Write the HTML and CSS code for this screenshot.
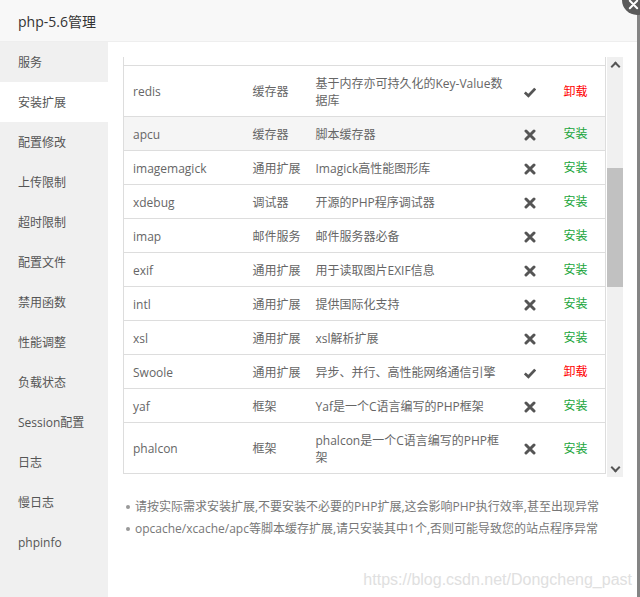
FILE: index.html
```html
<!DOCTYPE html>
<html lang="zh-CN">
<head>
<meta charset="utf-8">
<title>php-5.6管理</title>
<link rel="stylesheet" href="styles.css">
</head>
<body>
<div class="dialog">
  <div class="title">php-5.6管理</div>
  <a class="close" aria-label="关闭">
    <svg viewBox="0 0 12 12" width="11" height="11"><path d="M2 2L10 10M10 2L2 10" stroke="#fff" stroke-width="2.2" stroke-linecap="round"/></svg>
  </a>
  <div class="body">
    <ul class="side">
      <li>服务</li>
      <li class="on">安装扩展</li>
      <li>配置修改</li>
      <li>上传限制</li>
      <li>超时限制</li>
      <li>配置文件</li>
      <li>禁用函数</li>
      <li>性能调整</li>
      <li>负载状态</li>
      <li>Session配置</li>
      <li>日志</li>
      <li>慢日志</li>
      <li>phpinfo</li>
    </ul>
    <div class="main">
      <div class="tablebox">
        <div class="scroller">
          <table class="ext">
            <colgroup><col class="c-name"><col class="c-type"><col class="c-desc"><col class="c-st"><col class="c-op"></colgroup>
            <tbody>
              <tr class="prev"><td colspan="5"></td></tr>
              <tr><td>redis</td><td>缓存器</td><td>基于内存亦可持久化的Key-Value数据库</td><td class="st"><span class="ok"></span></td><td class="op"><a class="un">卸载</a></td></tr>
              <tr class="hover"><td>apcu</td><td>缓存器</td><td>脚本缓存器</td><td class="st"><span class="no"></span></td><td class="op"><a class="in">安装</a></td></tr>
              <tr><td>imagemagick</td><td>通用扩展</td><td>Imagick高性能图形库</td><td class="st"><span class="no"></span></td><td class="op"><a class="in">安装</a></td></tr>
              <tr><td>xdebug</td><td>调试器</td><td>开源的PHP程序调试器</td><td class="st"><span class="no"></span></td><td class="op"><a class="in">安装</a></td></tr>
              <tr><td>imap</td><td>邮件服务</td><td>邮件服务器必备</td><td class="st"><span class="no"></span></td><td class="op"><a class="in">安装</a></td></tr>
              <tr><td>exif</td><td>通用扩展</td><td>用于读取图片EXIF信息</td><td class="st"><span class="no"></span></td><td class="op"><a class="in">安装</a></td></tr>
              <tr><td>intl</td><td>通用扩展</td><td>提供国际化支持</td><td class="st"><span class="no"></span></td><td class="op"><a class="in">安装</a></td></tr>
              <tr><td>xsl</td><td>通用扩展</td><td>xsl解析扩展</td><td class="st"><span class="no"></span></td><td class="op"><a class="in">安装</a></td></tr>
              <tr><td>Swoole</td><td>通用扩展</td><td>异步、并行、高性能网络通信引擎</td><td class="st"><span class="ok"></span></td><td class="op"><a class="un">卸载</a></td></tr>
              <tr><td>yaf</td><td>框架</td><td>Yaf是一个C语言编写的PHP框架</td><td class="st"><span class="no"></span></td><td class="op"><a class="in">安装</a></td></tr>
              <tr><td>phalcon</td><td>框架</td><td>phalcon是一个C语言编写的PHP框架</td><td class="st"><span class="no"></span></td><td class="op"><a class="in">安装</a></td></tr>
            </tbody>
          </table>
        </div>
        <div class="vbar">
          <span class="arrow up"></span>
          <span class="track"><span class="thumb"></span></span>
          <span class="arrow down"></span>
        </div>
      </div>
      <ul class="help">
        <li>请按实际需求安装扩展,不要安装不必要的PHP扩展,这会影响PHP执行效率,甚至出现异常</li>
        <li>opcache/xcache/apc等脚本缓存扩展,请只安装其中1个,否则可能导致您的站点程序异常</li>
      </ul>
    </div>
  </div>
  <div class="watermark">https://blog.csdn.net/Dongcheng_past</div>
</div>
</body>
</html>
```

FILE: styles.css
```css
* { box-sizing: border-box; }
html, body { margin: 0; padding: 0; }
body {
  width: 640px;
  height: 597px;
  overflow: hidden;
  background: #848484;
  font-family: "Open Sans", "Noto Sans CJK SC", sans-serif;
  font-size: 12px;
  color: #666;
}
.dialog {
  position: relative;
  width: 637px;
  height: 597px;
  background: #fff;
  display: flex;
  flex-direction: column;
}
.title {
  height: 42px;
  line-height: 44px;
  padding-left: 18px;
  background: #f8f8f8;
  border-bottom: 1px solid #eee;
  color: #333;
  font-size: 14px;
}
.close {
  position: absolute;
  left: 622px;
  top: -15px;
  width: 30px;
  height: 30px;
  border-radius: 50%;
  background: #5a5a5a;
  display: flex;
  align-items: flex-start;
  justify-content: flex-start;
  padding: 14px 0 0 6px;
  z-index: 2;
}
.close svg { display: block; }
.body {
  flex: 1;
  display: flex;
  min-height: 0;
}
.side {
  list-style: none;
  margin: 0;
  padding: 0;
  width: 108px;
  background: #f0f0f0;
}
.side li {
  height: 40px;
  line-height: 42px;
  padding-left: 18px;
  color: #555;
}
.side li.on { background: #fff; }
.main {
  flex: 1;
  padding: 15px 0 0 15px;
}
.tablebox {
  display: flex;
  width: 500px;
}
.scroller {
  width: 483px;
  height: 420px;
  overflow: hidden;
}
.ext {
  width: 482px;
  table-layout: fixed;
  border-collapse: collapse;
  border-left: 1px solid #ddd;
  border-right: 1px solid #ddd;
}
.c-name { width: 120px; }
.c-type { width: 63px; }
.c-desc { width: 207px; }
.c-st { width: 32px; }
.c-op { width: 60px; }
.ext td {
  padding: 9px 0 7px 9px;
  line-height: 17px;
  border-bottom: 1px solid #ddd;
  color: #666;
  vertical-align: middle;
  white-space: nowrap;
}
.ext tr.prev td { height: 8px; padding: 0; }
.ext td:nth-child(3) { padding-left: 9px; padding-right: 11px; white-space: normal; }
.ext tr.hover td { background: #f5f5f5; }
.ext td.st { padding: 1px 0 0; text-align: center; }
.ext td.op { padding: 1px 0 0 18px; }
.ok, .no {
  display: inline-block;
  width: 12px;
  height: 12px;
  vertical-align: middle;
  background-repeat: no-repeat;
  background-size: 12px 12px;
}
.ok {
  background-image: url("data:image/svg+xml,%3Csvg xmlns='http://www.w3.org/2000/svg' viewBox='0 0 12 12'%3E%3Cpath d='M0.8 6.4L4.4 9.8L11.2 2.6' fill='none' stroke='%23555' stroke-width='2.8' stroke-linejoin='miter'/%3E%3C/svg%3E");
}
.no {
  background-image: url("data:image/svg+xml,%3Csvg xmlns='http://www.w3.org/2000/svg' viewBox='0 0 12 12'%3E%3Cpath d='M2 2L10 10M10 2L2 10' fill='none' stroke='%23555' stroke-width='3' stroke-linecap='round'/%3E%3C/svg%3E");
}
.un { color: #f00; }
.in { color: #20a53a; }
.vbar {
  width: 16px;
  height: 420px;
  margin-left: 1px;
  background: #f0f0f0;
  display: flex;
  flex-direction: column;
}
.arrow {
  height: 17px;
  display: flex;
  align-items: center;
  justify-content: center;
}
.arrow::before {
  content: "";
  width: 5px;
  height: 5px;
  border-left: 2px solid #555;
  border-top: 2px solid #555;
}
.arrow.up::before { transform: translateY(1px) rotate(45deg); }
.arrow.down::before { transform: translateY(-1px) rotate(225deg); }
.track {
  flex: 1;
  padding-top: 94px;
}
.thumb {
  display: block;
  height: 119px;
  background: #c1c1c1;
}
.help {
  list-style: none;
  margin: 19px 0 0;
  padding: 0 0 0 3px;
}
.help li {
  position: relative;
  line-height: 22px;
  padding-left: 9px;
  color: #777;
  white-space: nowrap;
}
.help li::before {
  content: "";
  position: absolute;
  left: 0;
  top: 9px;
  width: 4px;
  height: 4px;
  border-radius: 50%;
  background: #999;
}
.watermark {
  position: absolute;
  right: 5px;
  bottom: 8px;
  font-family: "Liberation Sans", Arial, sans-serif;
  font-size: 16px;
  color: #e0e0e0;
  pointer-events: none;
}
```
